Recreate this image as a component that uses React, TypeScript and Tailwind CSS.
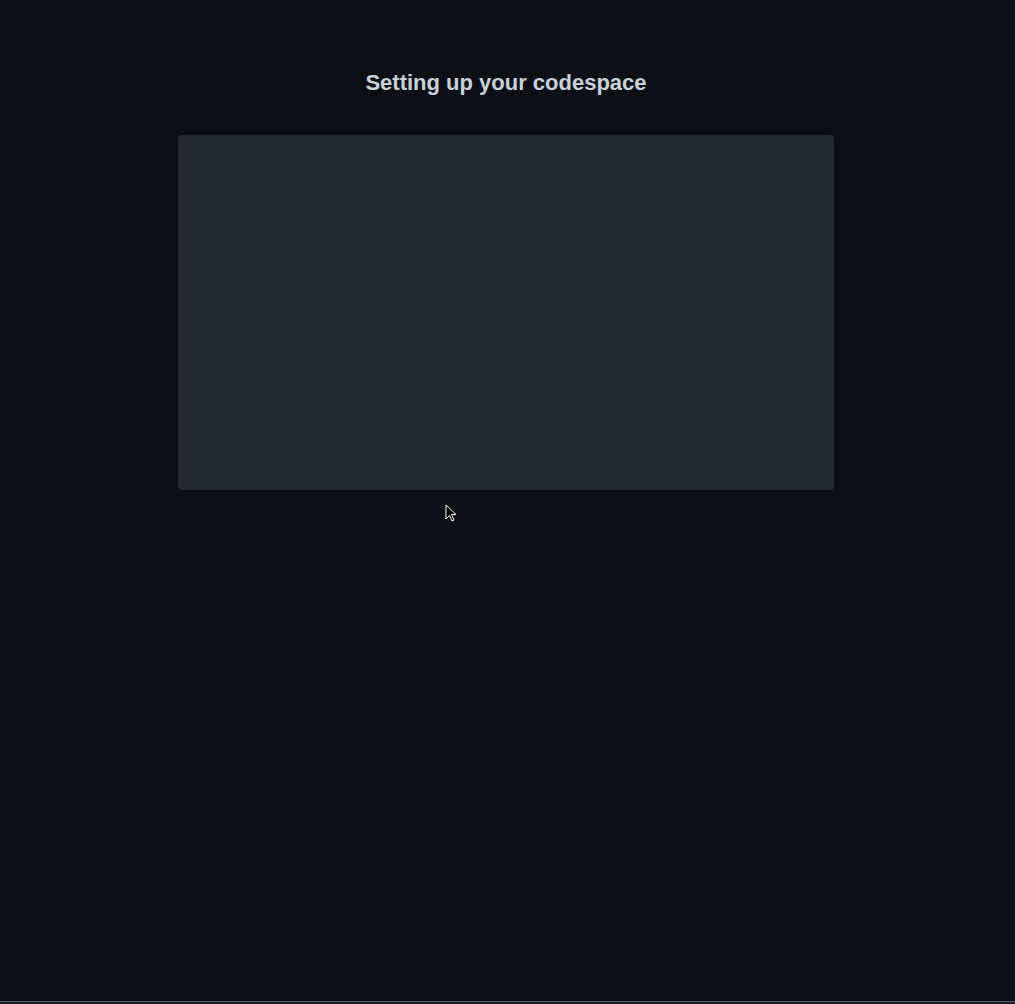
import React from 'react';

// Cursor arrow drawn over the page
const Cursor: React.FC = () => (
  <svg width="12" height="19" viewBox="0 0 12 19" className="absolute left-[445px] top-[504px]">
    <path d="M1 1 L1 15 L4.5 11.5 L7 17 L9 16 L6.5 10.5 L11 10.5 Z" fill="#000" stroke="#fff" strokeWidth="1" strokeLinejoin="round" />
  </svg>
);

export default function App() {
  return (
    <div className="relative h-[1004px] w-full overflow-hidden bg-[#0d0f16] font-['Liberation_Sans',Arial,sans-serif]">
      <div className="flex flex-col items-center pt-[69px] pr-[3px]">
        <h1 className="text-[22px] leading-[28px] font-bold text-[#c9d1d9]">Setting up your codespace</h1>
        <div className="mt-[38px] h-[355px] w-[656px] rounded-[4px] bg-[#24292e]" />
      </div>
      <Cursor />
      <div className="absolute bottom-0 left-0 right-0 h-[3px] border-t border-[#5a5d63] bg-[#1a1c22]" />
    </div>
  );
}
